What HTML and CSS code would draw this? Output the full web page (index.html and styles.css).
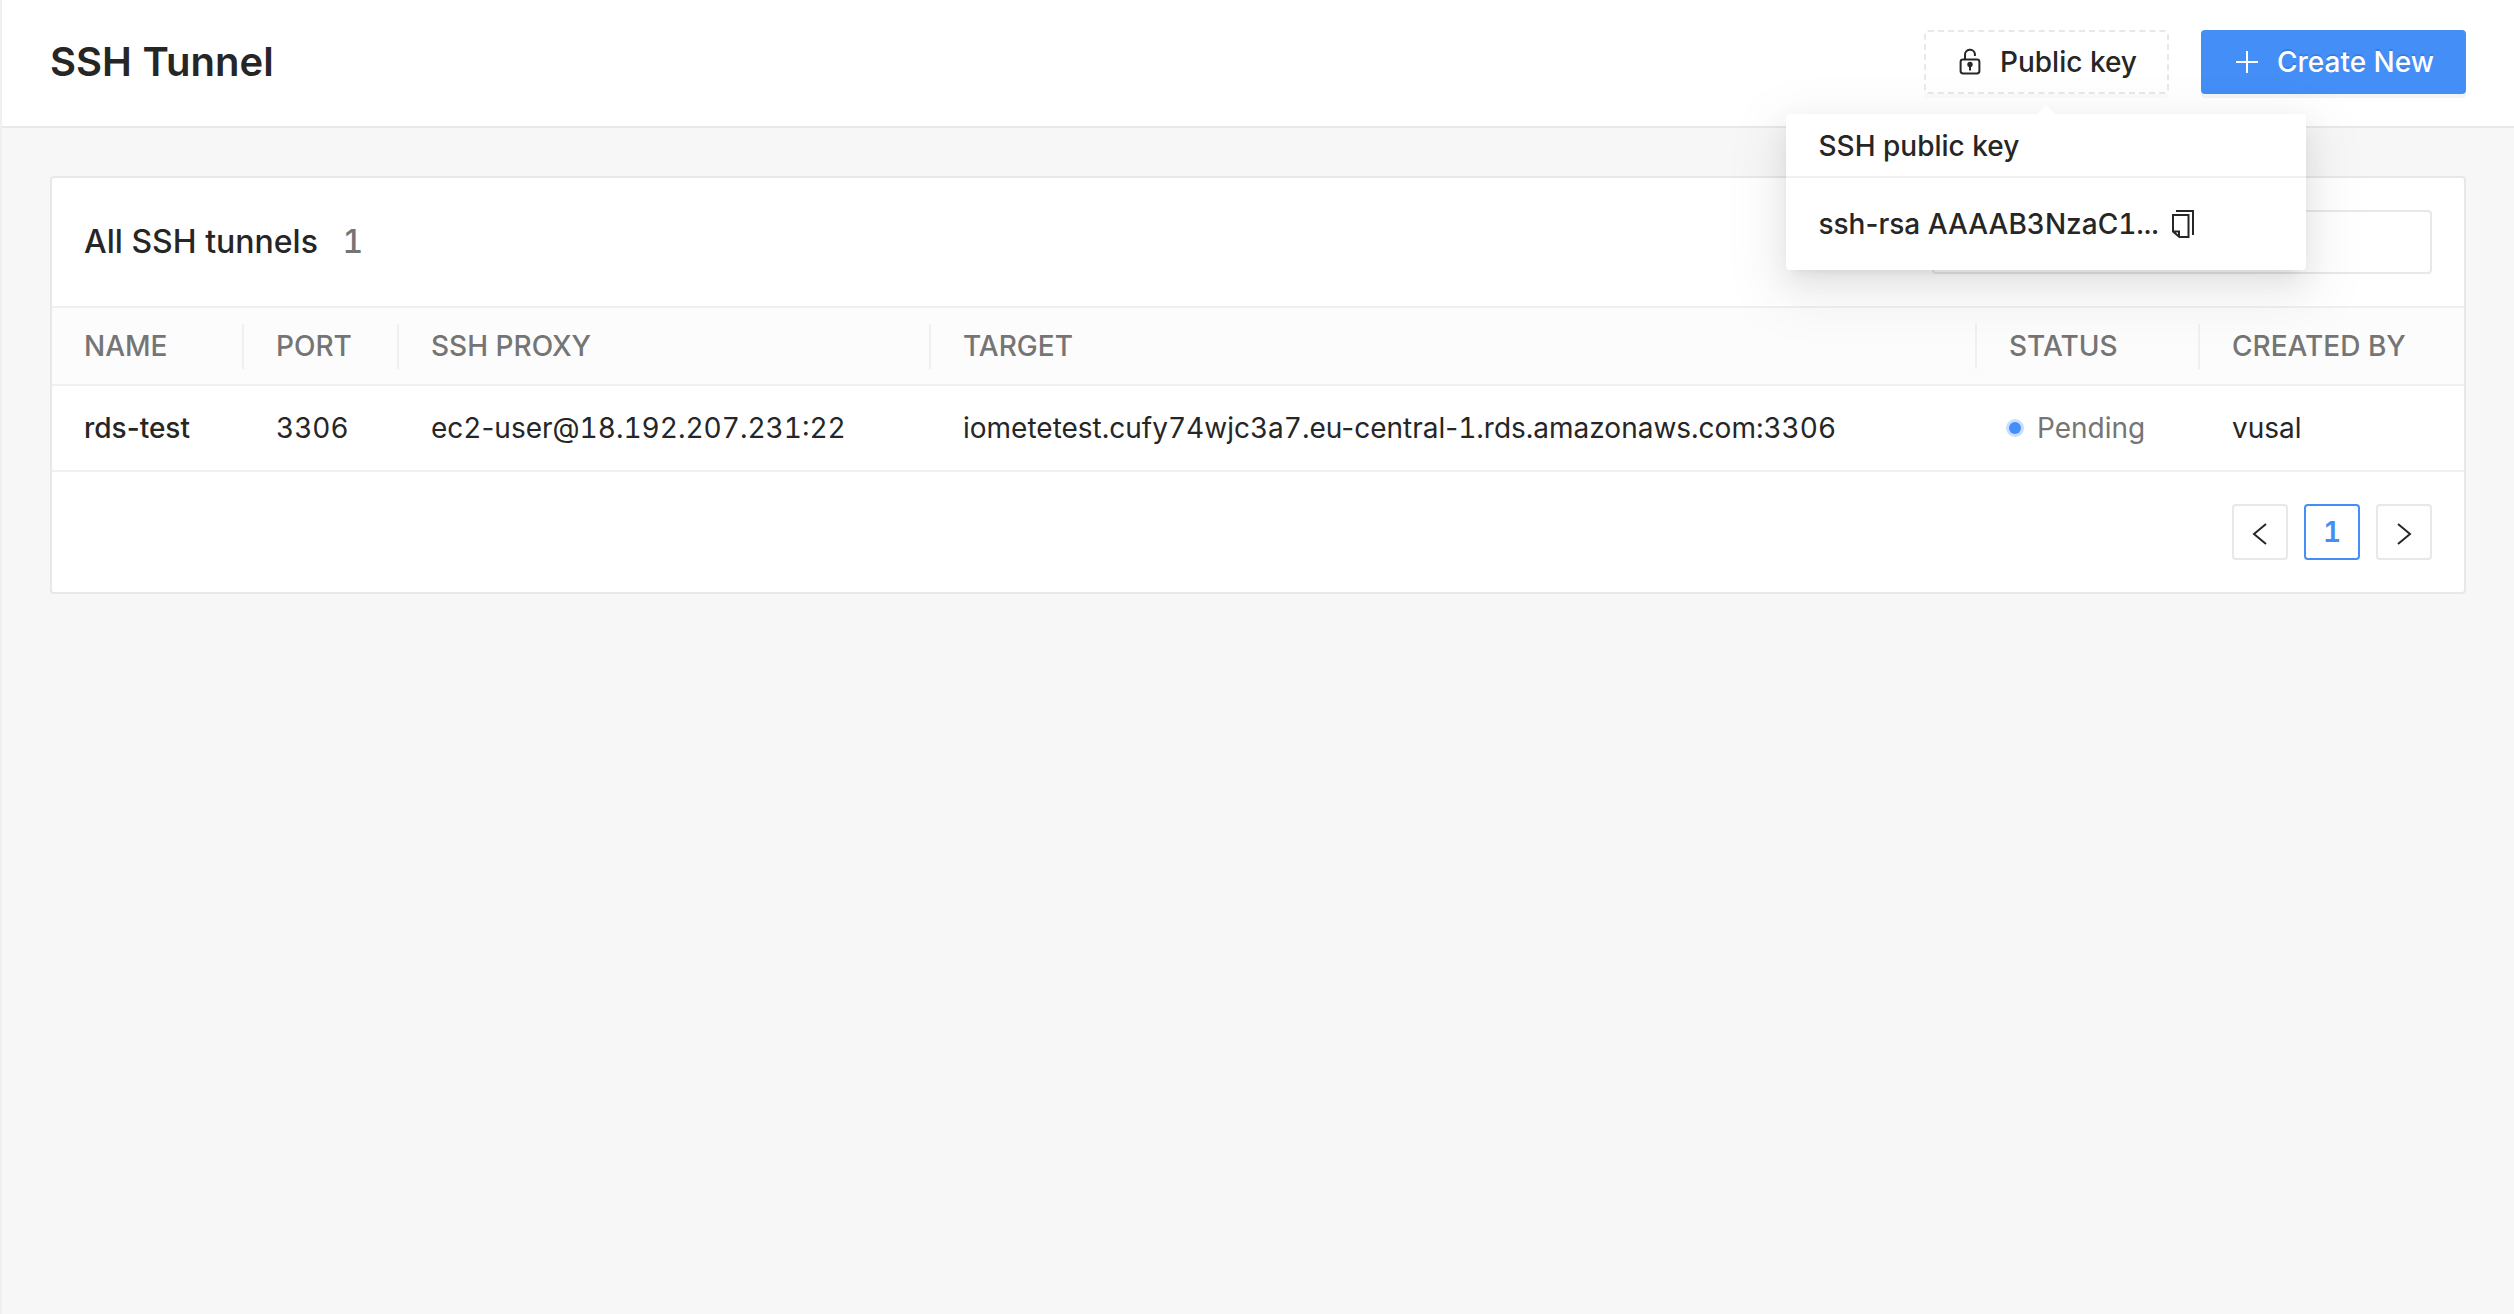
FILE: index.html
```html
<!DOCTYPE html>
<html lang="en">
<head>
<meta charset="utf-8">
<title>SSH Tunnel</title>
<link rel="stylesheet" href="styles.css">
</head>
<body>
<header class="page-header">
  <h1 class="page-title">SSH Tunnel</h1>
  <div class="actions">
    <div class="popover-anchor">
      <button class="btn btn-dashed" type="button" aria-expanded="true" aria-controls="key-popover">
        <svg class="icon" viewBox="0 0 28 28" aria-hidden="true">
          <rect x="4.6" y="11.6" width="18.8" height="13.8" rx="2.4" fill="none" stroke="currentColor" stroke-width="2"/>
          <path d="M9 11.500V6.800a5 5 0 0 1 9.900-1V8" fill="none" stroke="currentColor" stroke-width="2"/>
          <circle cx="14" cy="16.500" r="2.700" fill="currentColor"/>
          <path d="M14 17v5.500" stroke="currentColor" stroke-width="2"/>
        </svg>
        <span>Public key</span>
      </button>
      <section class="popover" id="key-popover">
        <h2 class="popover-title">SSH public key</h2>
        <div class="popover-body">
          <span class="key"><span class="prop">ssh-rsa</span> AAAAB3NzaC1...</span>
          <button class="copy" type="button" aria-label="Copy">
            <svg class="copy-icon" viewBox="0 0 24 28" aria-hidden="true">
              <path d="M5 1h17v24" fill="none" stroke="currentColor" stroke-width="2"/>
              <path d="M2 5h15.500v22H8.500L2 21.500zM2 21.500h6V27" fill="none" stroke="currentColor" stroke-width="2"/>
            </svg>
          </button>
        </div>
      </section>
    </div>
    <button class="btn btn-primary" type="button">
      <svg class="icon" viewBox="0 0 28 28" aria-hidden="true">
        <path d="M14 3v22M3 14h22" stroke="currentColor" stroke-width="2"/>
      </svg>
      <span>Create New</span>
    </button>
  </div>
</header>
<main class="content">
  <section class="card">
    <div class="card-head">
      <h2 class="card-title">All SSH tunnels <span class="count">1</span></h2>
      <input class="search" type="search" aria-label="Search tunnels">
    </div>
    <table class="table">
      <colgroup>
        <col class="col-name"><col class="col-port"><col class="col-proxy"><col><col class="col-status"><col class="col-creator">
      </colgroup>
      <thead>
        <tr><th>NAME</th><th>PORT</th><th>SSH PROXY</th><th>TARGET</th><th>STATUS</th><th>CREATED BY</th></tr>
      </thead>
      <tbody>
        <tr>
          <td class="name prop">rds-test</td>
          <td>3306</td>
          <td>ec2<span class="prop">-user@</span>18.192.207.231:22</td>
          <td>iometetest.cufy74wjc3a7.<span class="prop">eu-central-</span>1.rds.amazonaws.com:3306</td>
          <td><span class="status">Pending</span></td>
          <td>vusal</td>
        </tr>
      </tbody>
    </table>
    <nav class="pagination" aria-label="Pages">
      <button class="page" type="button" aria-label="Previous page">
        <svg class="icon" viewBox="0 0 28 28" aria-hidden="true"><path d="M20 6L8 16l12 10" fill="none" stroke="currentColor" stroke-width="2"/></svg>
      </button>
      <button class="page page-current" type="button" aria-current="page">1</button>
      <button class="page" type="button" aria-label="Next page">
        <svg class="icon" viewBox="0 0 28 28" aria-hidden="true"><path d="M8 6l12 10L8 26" fill="none" stroke="currentColor" stroke-width="2"/></svg>
      </button>
    </nav>
  </section>
</main>
</body>
</html>
```
FILE: styles.css
```css
* {
  box-sizing: border-box;
}

body {
  margin: 0;
  min-height: 100vh;
  border-left: 2px solid #f0f0f0;
  background: #f7f7f7;
  color: #262626;
  font: 400 28px/44px Inter, "Liberation Sans", sans-serif;
  font-feature-settings: "tnum";
}

h1,
h2 {
  margin: 0;
}

button,
input {
  color: inherit;
  font: inherit;
  font-feature-settings: inherit;
}

button {
  cursor: pointer;
}

.icon {
  width: 28px;
  height: 28px;
}

/* Tabular figures also widen the hyphen, so words with one opt out */
.prop {
  font-feature-settings: normal;
}

.page-header {
  display: flex;
  align-items: center;
  justify-content: space-between;
  padding: 30px 48px 32px;
  border-bottom: 2px solid #e8e8e8;
  background: #fff;
}

.page-title {
  font-size: 40px;
  font-weight: 600;
  line-height: 64px;
}

.actions {
  display: flex;
  gap: 32px;
}

.btn {
  display: flex;
  align-items: center;
  gap: 16px;
  height: 64px;
  padding: 0 30px;
  border: 2px solid #e8e8e8;
  border-radius: 4px;
  background: #fff;
  font-weight: 500;
  white-space: nowrap;
}

.btn-dashed {
  border-style: dashed;
  box-shadow: 0 4px 0 rgba(0, 0, 0, 0.015);
}

.btn-primary {
  border-color: #448ef7;
  background: #448ef7;
  color: #fff;
  text-shadow: 0 -2px 0 rgba(0, 0, 0, 0.12);
  box-shadow: 0 4px 0 rgba(0, 0, 0, 0.045);
}

.popover-anchor {
  position: relative;
}

.popover {
  position: absolute;
  z-index: 1;
  top: calc(100% + 20px);
  left: 50%;
  width: 520px;
  margin-left: -260px;
  border-radius: 4px;
  background: #fff;
  box-shadow:
    0 6px 12px -8px rgba(0, 0, 0, 0.12),
    0 12px 32px rgba(0, 0, 0, 0.08),
    0 18px 56px 16px rgba(0, 0, 0, 0.05);
}

.popover::before {
  content: "";
  position: absolute;
  bottom: 100%;
  left: 50%;
  margin-left: -9px;
  border: 9px solid transparent;
  border-top: 0;
  border-bottom-color: #fff;
}

.popover-title {
  padding: 10px 32px 8px;
  border-bottom: 2px solid #f0f0f0;
  font-size: 28px;
  font-weight: 500;
}

.popover-body {
  display: flex;
  align-items: center;
  gap: 12px;
  padding: 24px 32px;
}

.key {
  font-weight: 500;
}

.copy {
  display: flex;
  padding: 0;
  border: 0;
  background: none;
}

.copy-icon {
  width: 24px;
  height: 28px;
}

.content {
  padding: 48px;
}

.card {
  border: 2px solid #e8e8e8;
  border-radius: 4px;
  background: #fff;
}

.card-head {
  display: flex;
  align-items: center;
  justify-content: space-between;
  padding: 32px;
  border-bottom: 2px solid #f0f0f0;
}

.card-title {
  font-size: 32px;
  font-weight: 500;
}

.count {
  margin-left: 16px;
  color: #757575;
}

.search {
  width: 500px;
  height: 64px;
  padding: 0 22px;
  border: 2px solid #e8e8e8;
  border-radius: 4px;
  background: #fff;
}

.table {
  width: 100%;
  border-spacing: 0;
  table-layout: fixed;
}

.col-name {
  width: 192px;
}

.col-port {
  width: 155px;
}

.col-proxy {
  width: 532px;
}

.col-status {
  width: 223px;
}

.col-creator {
  width: 264px;
}

.table th,
.table td {
  padding: 20px 32px;
  border-bottom: 2px solid #f0f0f0;
  text-align: left;
  white-space: nowrap;
}

.table th {
  padding: 16px 32px;
  background: linear-gradient(#f0f0f0, #f0f0f0) right center / 2px 45px no-repeat #fcfcfc;
  color: #757575;
  font-weight: 500;
}

.table th:last-child {
  background: #fcfcfc;
}

.table .name {
  font-weight: 500;
}

.status {
  display: flex;
  align-items: center;
  gap: 16px;
  color: #757575;
}

.status::before {
  content: "";
  width: 12px;
  height: 12px;
  border-radius: 50%;
  background: #448ef7;
  box-shadow: 0 0 0 3px #c8defd;
}

.pagination {
  display: flex;
  justify-content: flex-end;
  gap: 16px;
  padding: 32px;
}

.page {
  display: flex;
  align-items: center;
  justify-content: center;
  width: 56px;
  height: 56px;
  padding: 0;
  border: 2px solid #e8e8e8;
  border-radius: 4px;
  background: #fff;
}

.page-current {
  border-color: #448ef7;
  color: #448ef7;
  font-weight: 600;
}
```
